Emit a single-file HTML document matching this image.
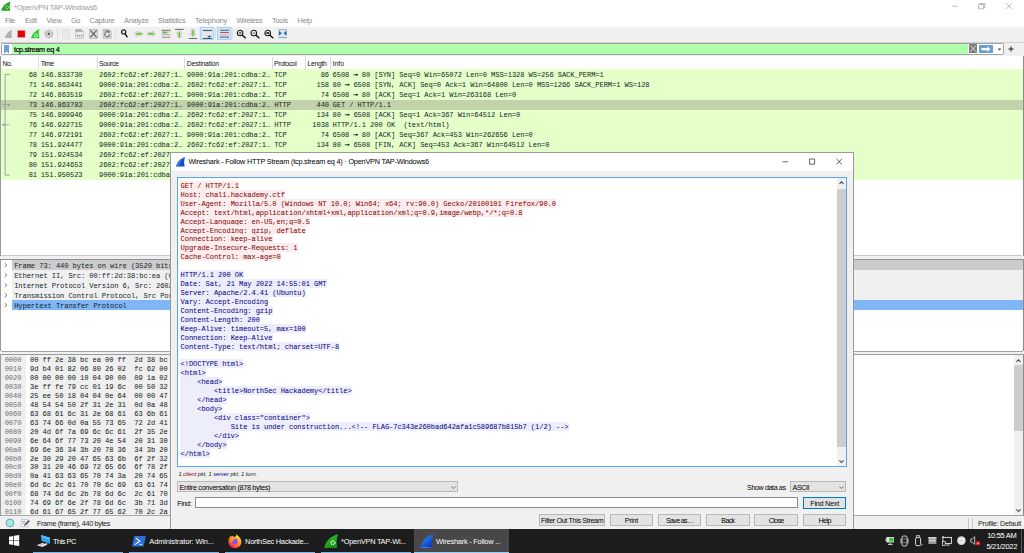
<!DOCTYPE html>
<html lang="en"><head><meta charset="utf-8"><title>Wireshark - Follow HTTP Stream</title>
<style>
html,body{margin:0;padding:0;}
body{width:1024px;height:553px;overflow:hidden;background:#fff;position:relative;font-family:"Liberation Sans",sans-serif;}
div{position:absolute;box-sizing:border-box;}
svg{position:absolute;overflow:visible;}
.t{position:absolute;white-space:pre;line-height:10px;}
.s{font-family:"Liberation Sans",sans-serif;}
.m{font-family:"Liberation Mono",monospace;}
</style></head>
<body>
<div style="left:0.00px;top:0.00px;width:1024.00px;height:13.00px;background:#fff;"></div>
<svg style="left:2px;top:1px" width="11" height="10" viewBox="0 0 11 10"><path d="M-0.8 9.7 C0.2 5.5 3.5 1.8 8.6 0.7 C7.6 3.5 7.4 6.5 8.2 9.7 Z" fill="#1fa51f"/><circle cx="5.1" cy="6.3" r="1.5" fill="none" stroke="#dff3df" stroke-width="1" stroke-dasharray="0.9 0.5"/></svg>
<span class="t s" style="top:3px;font-size:7.4px;color:#9a9a9a;left:14.10px;letter-spacing:-0.269px;">*OpenVPN TAP-Windows6</span>
<svg style="left:950px;top:0" width="70" height="13" viewBox="0 0 70 13"><path d="M2.2 6.2h5.6" stroke="#a8a8a8" stroke-width="0.7" fill="none"/><path d="M28.6 4.6h5v4.2h-5z M29.8 4.6v-1.1h5v4.2h-1.2" stroke="#9a9a9a" stroke-width="0.7" fill="none"/><path d="M56 3.2l6 6M62 3.2l-6 6" stroke="#9a9a9a" stroke-width="0.7" fill="none"/></svg>
<div style="left:0.00px;top:13.00px;width:1024.00px;height:13.00px;background:#fff;"></div>
<span class="t s" style="top:16px;font-size:7.4px;color:#8a8a8a;left:5.00px;letter-spacing:-0.480px;">File</span>
<span class="t s" style="top:16px;font-size:7.4px;color:#8a8a8a;left:25.00px;letter-spacing:-0.188px;">Edit</span>
<span class="t s" style="top:16px;font-size:7.4px;color:#8a8a8a;left:46.50px;letter-spacing:-0.223px;">View</span>
<span class="t s" style="top:16px;font-size:7.4px;color:#8a8a8a;left:71.00px;letter-spacing:-0.430px;">Go</span>
<span class="t s" style="top:16px;font-size:7.4px;color:#8a8a8a;left:89.50px;letter-spacing:-0.185px;">Capture</span>
<span class="t s" style="top:16px;font-size:7.4px;color:#8a8a8a;left:124.00px;letter-spacing:-0.257px;">Analyze</span>
<span class="t s" style="top:16px;font-size:7.4px;color:#8a8a8a;left:158.00px;letter-spacing:-0.208px;">Statistics</span>
<span class="t s" style="top:16px;font-size:7.4px;color:#8a8a8a;left:195.00px;letter-spacing:-0.189px;">Telephony</span>
<span class="t s" style="top:16px;font-size:7.4px;color:#8a8a8a;left:236.50px;letter-spacing:-0.355px;">Wireless</span>
<span class="t s" style="top:16px;font-size:7.4px;color:#8a8a8a;left:272.00px;letter-spacing:-0.253px;">Tools</span>
<span class="t s" style="top:16px;font-size:7.4px;color:#8a8a8a;left:297.50px;letter-spacing:-0.176px;">Help</span>
<div style="left:0.00px;top:26.00px;width:1024.00px;height:16.00px;background:linear-gradient(#fafafa,#f0f0f0 2px,#f0f0f0);"></div>
<div style="left:0.00px;top:41.50px;width:1024.00px;height:1.00px;background:#d0d0d0;"></div>
<div style="left:0.00px;top:42.50px;width:1024.00px;height:13.50px;background:#f0f0f0;"></div>
<svg style="left:0;top:26px" width="300" height="16" viewBox="0 0 300 16"><path d="M4.8 12 C5.6 8.2 8.2 5 12 3.9 C11.3 6.4 11.3 9.4 12.1 12 Z" fill="#b0b0b0"/><rect x="17.7" y="4.4" width="7.4" height="7" fill="#e00000" stroke="#c4a8a8" stroke-width="0.6"/><path d="M31 12.3 C32 8.4 35 4.6 39.4 3.3 C38.6 6.2 38.6 9.4 39.5 12.3 Z" fill="#2bd22b"/><circle cx="35.8" cy="9.4" r="1.5" fill="none" stroke="#eafbea" stroke-width="1.1" stroke-dasharray="0.9 0.5"/><circle cx="48.8" cy="7.9" r="3.7" fill="#e6e6e6" stroke="#9c9c9c" stroke-width="1.1" stroke-dasharray="1.5 0.8"/><circle cx="48.8" cy="7.9" r="2.5" fill="#ececec" stroke="#a8a8a8" stroke-width="0.5"/><circle cx="48.8" cy="7.9" r="1.3" fill="#5c5c5c"/><path d="M57.5 3v9.6" stroke="#d2d2d2" stroke-width="0.7"/><rect x="62.7" y="3.6" width="6.8" height="8.8" fill="#e9e9e9" stroke="#dcdcdc" stroke-width="0.6"/><path d="M75.7 3.4h5.4l2.4 2.4v6.6h-7.8z" fill="#ececec" stroke="#b4b4b4" stroke-width="0.6"/><path d="M75.7 3.4h5.4l2.4 2.4h-7.8z" fill="#a8a8a8"/><path d="M76.9 9.8h5.6" stroke="#8a8a8a" stroke-width="1.5" stroke-dasharray="1.2 0.9"/><rect x="89.4" y="3.4" width="8.2" height="9" fill="#dcdcdc" stroke="#b0b0b0" stroke-width="0.6"/><path d="M90.4 4.4l6.2 7M96.6 4.4l-6.2 7" stroke="#5e5e5e" stroke-width="1.1"/><path d="M103.1 3.4h6l2.2 2.2v6.8h-8.2z" fill="#dedede" stroke="#b0b0b0" stroke-width="0.6"/><path d="M103.1 3.4h6l2.2 2.2h-8.2z" fill="#b8b8b8"/><path d="M109.9 8.3a2.6 2.6 0 1 1 -1.3 -2.3" fill="none" stroke="#6e6e6e" stroke-width="1.1"/><path d="M107.6 4.4l2.6 1.3-2.2 1.7z" fill="#6e6e6e"/><path d="M115.4 3v9.6" stroke="#d2d2d2" stroke-width="0.7"/><circle cx="123.7" cy="5.9" r="2.1" fill="#dcdcdc" stroke="#1a1a1a" stroke-width="1.1"/><path d="M125.2 7.8l1.9 3" stroke="#111" stroke-width="1.4" stroke-linecap="round"/><path d="M134.1 7.8l3.3-2.6v1.1h4a1.5 1.5 0 0 1 0 3h-4v1.1z" fill="#e6eae2" stroke="#a9ada6" stroke-width="0.5"/><rect x="136.2" y="7.05" width="5.4" height="1.5" fill="#5cc020"/><path d="M155.9 7.8l-3.3-2.6v1.1h-4a1.5 1.5 0 0 0 0 3h4v1.1z" fill="#e6eae2" stroke="#a9ada6" stroke-width="0.5"/><rect x="148.4" y="7.05" width="5.4" height="1.5" fill="#5cc020"/><path d="M161.8 4.3h8.6" stroke="#444" stroke-width="0.8"/><path d="M161.8 8.8h8.6M161.8 11.5h8.6" stroke="#8a8a8a" stroke-width="0.8"/><rect x="161.8" y="9.3" width="8.6" height="1.6" fill="#dcdcdc"/><rect x="168.6" y="5" width="1.8" height="1.8" fill="#f2e85a"/><path d="M162 5.5h4v-1l2.6 2-2.6 2v-1h-4z" fill="#e6eae2" stroke="#a9ada6" stroke-width="0.5"/><rect x="162.6" y="6" width="4.4" height="1" fill="#5cc020"/><path d="M175 3.4h8.8" stroke="#444" stroke-width="0.8"/><path d="M179.3 4.5l3 3.2h-1.5v4h-3v-4h-1.5z" fill="#e6eae2" stroke="#a9ada6" stroke-width="0.5"/><rect x="178.6" y="6" width="1.4" height="5.2" fill="#5cc020"/><path d="M188.8 12.5h8.4" stroke="#444" stroke-width="0.8"/><path d="M192.9 11.3l3-3.2h-1.5v-4.4h-3v4.4h-1.5z" fill="#e6eae2" stroke="#a9ada6" stroke-width="0.5"/><rect x="192.2" y="4.2" width="1.4" height="5.6" fill="#5cc020"/><rect x="200.2" y="1.2" width="13.6" height="12.4" fill="#cce4f7" stroke="#8cc4f2" stroke-width="0.6"/><rect x="202.8" y="4.6" width="9.2" height="7.6" fill="#efefef"/><path d="M202.8 4.6h9.2" stroke="#333" stroke-width="0.9"/><path d="M202.8 7.2h9.2M202.8 9.4h9.2" stroke="#cfcfcf" stroke-width="0.6"/><path d="M202.8 12.4h9.2" stroke="#333" stroke-width="0.9"/><path d="M207 9.8h4.6l-2.3 2.2z" fill="#1c62c4"/><path d="M215.5 3v9.6" stroke="#d2d2d2" stroke-width="0.7"/><rect x="217.4" y="1.2" width="13.6" height="12.4" fill="#cce4f7" stroke="#8cc4f2" stroke-width="0.6"/><path d="M220.2 4.3h8.8" stroke="#444" stroke-width="0.8"/><path d="M220.2 6.5h8.8" stroke="#e83030" stroke-width="0.9"/><rect x="220.2" y="8" width="8.8" height="2.2" fill="#cdc6dc"/><path d="M220.2 11.2h8.8" stroke="#444" stroke-width="0.8"/><path d="M232.6 3v9.6" stroke="#d2d2d2" stroke-width="0.7"/><circle cx="240.1" cy="7" r="2.8" fill="#ececec" stroke="#1a1a1a" stroke-width="1.05"/><path d="M242.29999999999998 9.2l2.9 2.5" stroke="#111" stroke-width="1.5" stroke-linecap="round"/><circle cx="253.8" cy="7" r="2.8" fill="#ececec" stroke="#1a1a1a" stroke-width="1.05"/><path d="M256.0 9.2l2.9 2.5" stroke="#111" stroke-width="1.5" stroke-linecap="round"/><circle cx="267.7" cy="7" r="2.8" fill="#ececec" stroke="#1a1a1a" stroke-width="1.05"/><path d="M269.9 9.2l2.9 2.5" stroke="#111" stroke-width="1.5" stroke-linecap="round"/><path d="M238.7 7h2.8M240.1 5.6v2.8" stroke="#222" stroke-width="0.7"/><path d="M252.4 7h2.8" stroke="#555" stroke-width="0.8"/><rect x="266.4" y="6" width="2.6" height="2" fill="#333"/><path d="M278.4 3.8h8.6M278.4 11.6h8.6" stroke="#777" stroke-width="0.7"/><rect x="278.6" y="4.6" width="8.2" height="5.6" fill="#dfe8f4"/><path d="M278.8 4.6l3 2.6-3 2.6z M286.6 4.6l-3 2.6 3 2.6z" fill="#1c62c4"/><path d="M279.4 10.6h6.6" stroke="#bbb" stroke-width="0.5" stroke-dasharray="1 0.6"/></svg>
<div style="left:1.00px;top:43.00px;width:1003.00px;height:11.50px;background:#fff;border:0.7px solid #a2a2a2;border-radius:1.5px;"></div>
<div style="left:12.30px;top:43.60px;width:956.00px;height:10.30px;background:#afffaf;"></div>
<svg style="left:3.6px;top:44.6px" width="5" height="8.4" viewBox="0 0 5 8.4"><path d="M0 0h5v8.4l-2.5-2-2.5 2z" fill="#6f9fd8"/></svg>
<span class="t s" style="top:45px;font-size:7.3px;color:#000;left:14.00px;letter-spacing:-0.326px;-webkit-text-stroke:0.2px #000;">tcp.stream eq 4</span>
<div style="left:968.60px;top:44.20px;width:8.40px;height:9.20px;background:#7d7d7d;"></div>
<svg style="left:968.6px;top:44.2px" width="8.4" height="9.2" viewBox="0 0 8.4 9.2"><path d="M1.4 1.6l5.6 6M7 1.6l-5.6 6" stroke="#f4f4f4" stroke-width="0.8"/></svg>
<div style="left:979.20px;top:44.60px;width:13.80px;height:8.20px;background:#6a9fd6;border-radius:1px;"></div>
<svg style="left:979.2px;top:44.6px" width="13.8" height="8.2" viewBox="0 0 13.8 8.2"><path d="M2.4 3h5.6v-1.6l3.6 2.7-3.6 2.7v-1.6h-5.6z" fill="#fff"/></svg>
<svg style="left:997px;top:47.6px" width="5" height="3" viewBox="0 0 5 3"><path d="M0.6 0.4h3.8l-1.9 2.2z" fill="#444"/></svg>
<svg style="left:1007.6px;top:46.2px" width="6" height="6" viewBox="0 0 6 6"><path d="M3 0.4v5.2M0.4 3h5.2" stroke="#222" stroke-width="1"/></svg>
<div style="left:0.00px;top:55.50px;width:1024.00px;height:0.90px;background:#a0a0a0;"></div>
<div style="left:0.00px;top:56.30px;width:1023.00px;height:13.20px;background:#fff;"></div>
<div style="left:0.00px;top:56.00px;width:0.90px;height:200.00px;background:#9a9a9a;"></div>
<div style="left:1022.60px;top:56.00px;width:0.90px;height:200.00px;background:#8a8a8a;"></div>
<div style="left:38.30px;top:57.00px;width:0.70px;height:11.50px;background:#dcdcdc;"></div>
<div style="left:96.50px;top:57.00px;width:0.70px;height:11.50px;background:#dcdcdc;"></div>
<div style="left:184.40px;top:57.00px;width:0.70px;height:11.50px;background:#dcdcdc;"></div>
<div style="left:272.00px;top:57.00px;width:0.70px;height:11.50px;background:#dcdcdc;"></div>
<div style="left:305.00px;top:57.00px;width:0.70px;height:11.50px;background:#dcdcdc;"></div>
<div style="left:330.20px;top:57.00px;width:0.70px;height:11.50px;background:#dcdcdc;"></div>
<span class="t s" style="top:59px;font-size:6.9px;color:#111;left:2.60px;letter-spacing:-0.611px;">No.</span>
<span class="t s" style="top:59px;font-size:6.9px;color:#111;left:40.80px;letter-spacing:-0.591px;">Time</span>
<span class="t s" style="top:59px;font-size:6.9px;color:#111;left:99.00px;letter-spacing:-0.391px;">Source</span>
<span class="t s" style="top:59px;font-size:6.9px;color:#111;left:186.80px;letter-spacing:-0.208px;">Destination</span>
<span class="t s" style="top:59px;font-size:6.9px;color:#111;left:274.00px;letter-spacing:-0.348px;">Protocol</span>
<span class="t s" style="top:59px;font-size:6.9px;color:#111;left:307.60px;letter-spacing:-0.363px;">Length</span>
<span class="t s" style="top:59px;font-size:6.9px;color:#111;left:332.60px;letter-spacing:-0.025px;">Info</span>
<div style="left:1.00px;top:69.40px;width:1021.60px;height:110.97px;background:#e4ffc7;"></div>
<div style="left:1.00px;top:99.61px;width:1021.60px;height:10.07px;background:#c2d3ab;"></div>
<span class="t m" style="top:70px;font-size:7.1px;color:#12272e;right:987.00px;letter-spacing:-0.088px;">68</span>
<span class="t m" style="top:70px;font-size:7.1px;color:#12272e;left:40.80px;letter-spacing:-0.088px;">146.833730</span>
<span class="t m" style="top:70px;font-size:7.1px;color:#12272e;left:99.00px;letter-spacing:-0.087px;">2602:fc62:ef:2027:1…</span>
<span class="t m" style="top:70px;font-size:7.1px;color:#12272e;left:186.80px;letter-spacing:-0.087px;">9000:91a:201:cdba:2…</span>
<span class="t m" style="top:70px;font-size:7.1px;color:#12272e;left:274.20px;letter-spacing:-0.090px;">TCP</span>
<span class="t m" style="top:70px;font-size:7.1px;color:#12272e;right:695.00px;letter-spacing:-0.088px;">86</span>
<span class="t m" style="top:70px;font-size:7.1px;color:#12272e;left:332.60px;letter-spacing:-0.087px;">6508 <b style="-webkit-text-stroke:0.4px #12272e;position:relative;top:-1px">→</b> 80 [SYN] Seq=0 Win=65072 Len=0 MSS=1328 WS=256 SACK_PERM=1</span>
<span class="t m" style="top:80px;font-size:7.1px;color:#12272e;right:987.00px;letter-spacing:-0.088px;">71</span>
<span class="t m" style="top:80px;font-size:7.1px;color:#12272e;left:40.80px;letter-spacing:-0.088px;">146.863441</span>
<span class="t m" style="top:80px;font-size:7.1px;color:#12272e;left:99.00px;letter-spacing:-0.087px;">9000:91a:201:cdba:2…</span>
<span class="t m" style="top:80px;font-size:7.1px;color:#12272e;left:186.80px;letter-spacing:-0.087px;">2602:fc62:ef:2027:1…</span>
<span class="t m" style="top:80px;font-size:7.1px;color:#12272e;left:274.20px;letter-spacing:-0.090px;">TCP</span>
<span class="t m" style="top:80px;font-size:7.1px;color:#12272e;right:695.00px;letter-spacing:-0.090px;">158</span>
<span class="t m" style="top:80px;font-size:7.1px;color:#12272e;left:332.60px;letter-spacing:-0.087px;">80 <b style="-webkit-text-stroke:0.4px #12272e;position:relative;top:-1px">→</b> 6508 [SYN, ACK] Seq=0 Ack=1 Win=64800 Len=0 MSS=1266 SACK_PERM=1 WS=128</span>
<span class="t m" style="top:90px;font-size:7.1px;color:#12272e;right:987.00px;letter-spacing:-0.088px;">72</span>
<span class="t m" style="top:90px;font-size:7.1px;color:#12272e;left:40.80px;letter-spacing:-0.088px;">146.863519</span>
<span class="t m" style="top:90px;font-size:7.1px;color:#12272e;left:99.00px;letter-spacing:-0.087px;">2602:fc62:ef:2027:1…</span>
<span class="t m" style="top:90px;font-size:7.1px;color:#12272e;left:186.80px;letter-spacing:-0.087px;">9000:91a:201:cdba:2…</span>
<span class="t m" style="top:90px;font-size:7.1px;color:#12272e;left:274.20px;letter-spacing:-0.090px;">TCP</span>
<span class="t m" style="top:90px;font-size:7.1px;color:#12272e;right:695.00px;letter-spacing:-0.088px;">74</span>
<span class="t m" style="top:90px;font-size:7.1px;color:#12272e;left:332.60px;letter-spacing:-0.087px;">6508 <b style="-webkit-text-stroke:0.4px #12272e;position:relative;top:-1px">→</b> 80 [ACK] Seq=1 Ack=1 Win=263168 Len=0</span>
<span class="t m" style="top:100px;font-size:7.1px;color:#12272e;right:987.00px;letter-spacing:-0.088px;">73</span>
<span class="t m" style="top:100px;font-size:7.1px;color:#12272e;left:40.80px;letter-spacing:-0.088px;">146.863783</span>
<span class="t m" style="top:100px;font-size:7.1px;color:#12272e;left:99.00px;letter-spacing:-0.087px;">2602:fc62:ef:2027:1…</span>
<span class="t m" style="top:100px;font-size:7.1px;color:#12272e;left:186.80px;letter-spacing:-0.087px;">9000:91a:201:cdba:2…</span>
<span class="t m" style="top:100px;font-size:7.1px;color:#12272e;left:274.20px;letter-spacing:-0.088px;">HTTP</span>
<span class="t m" style="top:100px;font-size:7.1px;color:#12272e;right:695.00px;letter-spacing:-0.090px;">440</span>
<span class="t m" style="top:100px;font-size:7.1px;color:#12272e;left:332.60px;letter-spacing:-0.087px;">GET / HTTP/1.1 </span>
<span class="t m" style="top:110px;font-size:7.1px;color:#12272e;right:987.00px;letter-spacing:-0.088px;">75</span>
<span class="t m" style="top:110px;font-size:7.1px;color:#12272e;left:40.80px;letter-spacing:-0.088px;">146.899946</span>
<span class="t m" style="top:110px;font-size:7.1px;color:#12272e;left:99.00px;letter-spacing:-0.087px;">9000:91a:201:cdba:2…</span>
<span class="t m" style="top:110px;font-size:7.1px;color:#12272e;left:186.80px;letter-spacing:-0.087px;">2602:fc62:ef:2027:1…</span>
<span class="t m" style="top:110px;font-size:7.1px;color:#12272e;left:274.20px;letter-spacing:-0.090px;">TCP</span>
<span class="t m" style="top:110px;font-size:7.1px;color:#12272e;right:695.00px;letter-spacing:-0.090px;">134</span>
<span class="t m" style="top:110px;font-size:7.1px;color:#12272e;left:332.60px;letter-spacing:-0.088px;">80 <b style="-webkit-text-stroke:0.4px #12272e;position:relative;top:-1px">→</b> 6508 [ACK] Seq=1 Ack=367 Win=64512 Len=0</span>
<span class="t m" style="top:120px;font-size:7.1px;color:#12272e;right:987.00px;letter-spacing:-0.088px;">76</span>
<span class="t m" style="top:120px;font-size:7.1px;color:#12272e;left:40.80px;letter-spacing:-0.088px;">146.922715</span>
<span class="t m" style="top:120px;font-size:7.1px;color:#12272e;left:99.00px;letter-spacing:-0.087px;">9000:91a:201:cdba:2…</span>
<span class="t m" style="top:120px;font-size:7.1px;color:#12272e;left:186.80px;letter-spacing:-0.087px;">2602:fc62:ef:2027:1…</span>
<span class="t m" style="top:120px;font-size:7.1px;color:#12272e;left:274.20px;letter-spacing:-0.088px;">HTTP</span>
<span class="t m" style="top:120px;font-size:7.1px;color:#12272e;right:695.00px;letter-spacing:-0.088px;">1038</span>
<span class="t m" style="top:120px;font-size:7.1px;color:#12272e;left:332.60px;letter-spacing:-0.087px;">HTTP/1.1 200 OK  (text/html)</span>
<span class="t m" style="top:130px;font-size:7.1px;color:#12272e;right:987.00px;letter-spacing:-0.088px;">77</span>
<span class="t m" style="top:130px;font-size:7.1px;color:#12272e;left:40.80px;letter-spacing:-0.088px;">146.972191</span>
<span class="t m" style="top:130px;font-size:7.1px;color:#12272e;left:99.00px;letter-spacing:-0.087px;">2602:fc62:ef:2027:1…</span>
<span class="t m" style="top:130px;font-size:7.1px;color:#12272e;left:186.80px;letter-spacing:-0.087px;">9000:91a:201:cdba:2…</span>
<span class="t m" style="top:130px;font-size:7.1px;color:#12272e;left:274.20px;letter-spacing:-0.090px;">TCP</span>
<span class="t m" style="top:130px;font-size:7.1px;color:#12272e;right:695.00px;letter-spacing:-0.088px;">74</span>
<span class="t m" style="top:130px;font-size:7.1px;color:#12272e;left:332.60px;letter-spacing:-0.087px;">6508 <b style="-webkit-text-stroke:0.4px #12272e;position:relative;top:-1px">→</b> 80 [ACK] Seq=367 Ack=453 Win=262656 Len=0</span>
<span class="t m" style="top:140px;font-size:7.1px;color:#12272e;right:987.00px;letter-spacing:-0.088px;">78</span>
<span class="t m" style="top:140px;font-size:7.1px;color:#12272e;left:40.80px;letter-spacing:-0.088px;">151.924477</span>
<span class="t m" style="top:140px;font-size:7.1px;color:#12272e;left:99.00px;letter-spacing:-0.087px;">9000:91a:201:cdba:2…</span>
<span class="t m" style="top:140px;font-size:7.1px;color:#12272e;left:186.80px;letter-spacing:-0.087px;">2602:fc62:ef:2027:1…</span>
<span class="t m" style="top:140px;font-size:7.1px;color:#12272e;left:274.20px;letter-spacing:-0.090px;">TCP</span>
<span class="t m" style="top:140px;font-size:7.1px;color:#12272e;right:695.00px;letter-spacing:-0.090px;">134</span>
<span class="t m" style="top:140px;font-size:7.1px;color:#12272e;left:332.60px;letter-spacing:-0.088px;">80 <b style="-webkit-text-stroke:0.4px #12272e;position:relative;top:-1px">→</b> 6508 [FIN, ACK] Seq=453 Ack=367 Win=64512 Len=0</span>
<span class="t m" style="top:150px;font-size:7.1px;color:#12272e;right:987.00px;letter-spacing:-0.088px;">79</span>
<span class="t m" style="top:150px;font-size:7.1px;color:#12272e;left:40.80px;letter-spacing:-0.088px;">151.924534</span>
<span class="t m" style="top:150px;font-size:7.1px;color:#12272e;left:99.00px;letter-spacing:-0.087px;">2602:fc62:ef:2027:1…</span>
<span class="t m" style="top:150px;font-size:7.1px;color:#12272e;left:186.80px;letter-spacing:-0.087px;">9000:91a:201:cdba:2…</span>
<span class="t m" style="top:150px;font-size:7.1px;color:#12272e;left:274.20px;letter-spacing:-0.090px;">TCP</span>
<span class="t m" style="top:150px;font-size:7.1px;color:#12272e;right:695.00px;letter-spacing:-0.088px;">74</span>
<span class="t m" style="top:150px;font-size:7.1px;color:#12272e;left:332.60px;letter-spacing:-0.087px;">6508 <b style="-webkit-text-stroke:0.4px #12272e;position:relative;top:-1px">→</b> 80 [ACK] Seq=368 Ack=454 Win=262656 Len=0</span>
<span class="t m" style="top:160px;font-size:7.1px;color:#12272e;right:987.00px;letter-spacing:-0.088px;">80</span>
<span class="t m" style="top:160px;font-size:7.1px;color:#12272e;left:40.80px;letter-spacing:-0.088px;">151.924653</span>
<span class="t m" style="top:160px;font-size:7.1px;color:#12272e;left:99.00px;letter-spacing:-0.087px;">2602:fc62:ef:2027:1…</span>
<span class="t m" style="top:160px;font-size:7.1px;color:#12272e;left:186.80px;letter-spacing:-0.087px;">9000:91a:201:cdba:2…</span>
<span class="t m" style="top:160px;font-size:7.1px;color:#12272e;left:274.20px;letter-spacing:-0.090px;">TCP</span>
<span class="t m" style="top:160px;font-size:7.1px;color:#12272e;right:695.00px;letter-spacing:-0.088px;">74</span>
<span class="t m" style="top:160px;font-size:7.1px;color:#12272e;left:332.60px;letter-spacing:-0.087px;">6508 <b style="-webkit-text-stroke:0.4px #12272e;position:relative;top:-1px">→</b> 80 [FIN, ACK] Seq=368 Ack=454 Win=262656 Len=0</span>
<span class="t m" style="top:170px;font-size:7.1px;color:#12272e;right:987.00px;letter-spacing:-0.088px;">81</span>
<span class="t m" style="top:170px;font-size:7.1px;color:#12272e;left:40.80px;letter-spacing:-0.088px;">151.950523</span>
<span class="t m" style="top:170px;font-size:7.1px;color:#12272e;left:99.00px;letter-spacing:-0.087px;">9000:91a:201:cdba:2…</span>
<span class="t m" style="top:170px;font-size:7.1px;color:#12272e;left:186.80px;letter-spacing:-0.087px;">2602:fc62:ef:2027:1…</span>
<span class="t m" style="top:170px;font-size:7.1px;color:#12272e;left:274.20px;letter-spacing:-0.090px;">TCP</span>
<span class="t m" style="top:170px;font-size:7.1px;color:#12272e;right:695.00px;letter-spacing:-0.088px;">74</span>
<span class="t m" style="top:170px;font-size:7.1px;color:#12272e;left:332.60px;letter-spacing:-0.088px;">80 <b style="-webkit-text-stroke:0.4px #12272e;position:relative;top:-1px">→</b> 6508 [ACK] Seq=454 Ack=369 Win=64512 Len=0</span>
<svg style="left:0;top:0" width="20" height="200" viewBox="0 0 20 200"><path d="M9.6 74.435H5.1V175.135H9.6" fill="none" stroke="#7f868e" stroke-width="0.75"/><path d="M2.2 104.64500000000001h7.4" stroke="#8d93a0" stroke-width="0.7"/><path d="M8 103.34500000000001l2.2 1.3-2.2 1.3z" fill="#8d93a0"/><path d="M2.4 124.78500000000001h7.2" stroke="#8d93a0" stroke-width="0.7"/><path d="M4.2 123.48500000000001l-2.2 1.3 2.2 1.3z" fill="#8d93a0"/></svg>
<div style="left:1.00px;top:255.00px;width:1021.40px;height:0.80px;background:#c8c8c8;"></div>
<div style="left:0.00px;top:255.80px;width:1024.00px;height:3.00px;background:#f0f0f0;"></div>
<div style="left:0.00px;top:259.00px;width:1024.00px;height:1.00px;background:#8e9098;"></div>
<div style="left:0.00px;top:259.60px;width:0.90px;height:91.60px;background:#9a9a9a;"></div>
<div style="left:1022.60px;top:259.60px;width:0.90px;height:91.60px;background:#8a8a8a;"></div>
<div style="left:1.00px;top:260.00px;width:1021.60px;height:91.00px;background:#fff;"></div>
<div style="left:12.40px;top:259.80px;width:1010.30px;height:10.07px;background:#cbcbcb;"></div>
<div style="left:12.40px;top:269.87px;width:1010.30px;height:30.21px;background:#f0f0f0;"></div>
<div style="left:12.40px;top:300.08px;width:1010.30px;height:10.07px;background:#80b5f6;"></div>
<span class="t m" style="top:261px;font-size:7.1px;color:#12272e;left:14.20px;letter-spacing:-0.087px;">Frame 73: 440 bytes on wire (3520 bits</span>
<svg style="left:4px;top:262.64px" width="4" height="4.4" viewBox="0 0 4 4.4"><path d="M0.7 0.2l2.3 2-2.3 2" fill="none" stroke="#5e5e5e" stroke-width="0.75"/></svg>
<span class="t m" style="top:271px;font-size:7.1px;color:#12272e;left:14.20px;letter-spacing:-0.087px;">Ethernet II, Src: 00:ff:2d:38:bc:ea (0</span>
<svg style="left:4px;top:272.71px" width="4" height="4.4" viewBox="0 0 4 4.4"><path d="M0.7 0.2l2.3 2-2.3 2" fill="none" stroke="#5e5e5e" stroke-width="0.75"/></svg>
<span class="t m" style="top:281px;font-size:7.1px;color:#12272e;left:14.20px;letter-spacing:-0.087px;">Internet Protocol Version 6, Src: 2602</span>
<svg style="left:4px;top:282.78px" width="4" height="4.4" viewBox="0 0 4 4.4"><path d="M0.7 0.2l2.3 2-2.3 2" fill="none" stroke="#5e5e5e" stroke-width="0.75"/></svg>
<span class="t m" style="top:291px;font-size:7.1px;color:#12272e;left:14.20px;letter-spacing:-0.087px;">Transmission Control Protocol, Src Por</span>
<svg style="left:4px;top:292.85px" width="4" height="4.4" viewBox="0 0 4 4.4"><path d="M0.7 0.2l2.3 2-2.3 2" fill="none" stroke="#5e5e5e" stroke-width="0.75"/></svg>
<span class="t m" style="top:301px;font-size:7.1px;color:#12272e;left:14.20px;letter-spacing:-0.087px;">Hypertext Transfer Protocol</span>
<svg style="left:4px;top:302.92px" width="4" height="4.4" viewBox="0 0 4 4.4"><path d="M0.7 0.2l2.3 2-2.3 2" fill="none" stroke="#5e5e5e" stroke-width="0.75"/></svg>
<div style="left:1.00px;top:351.00px;width:1022.00px;height:1.00px;background:#a2a3aa;"></div>
<div style="left:0.00px;top:352.00px;width:1024.00px;height:2.00px;background:#f0f0f0;"></div>
<div style="left:0.00px;top:353.90px;width:1024.00px;height:1.00px;background:#9a9ba2;"></div>
<div style="left:0.00px;top:355.40px;width:0.90px;height:160.60px;background:#9a9a9a;"></div>
<div style="left:1022.60px;top:355.40px;width:0.90px;height:160.60px;background:#8a8a8a;"></div>
<div style="left:1.00px;top:354.90px;width:1021.60px;height:161.10px;background:#fff;"></div>
<div style="left:1.00px;top:354.90px;width:24.50px;height:161.10px;background:#efefef;"></div>
<div style="left:29.50px;top:354.90px;width:145.00px;height:161.10px;background:#efefef;"></div>
<span class="t m" style="top:355px;font-size:7.1px;color:#707070;left:4.70px;letter-spacing:-0.088px;">0000</span>
<span class="t m" style="top:355px;font-size:7.1px;color:#0e1a20;left:30.00px;letter-spacing:-0.087px;">00 ff 2e 38 bc ea 00 ff  2d 38 bc ea</span>
<span class="t m" style="top:364px;font-size:7.1px;color:#707070;left:4.70px;letter-spacing:-0.088px;">0010</span>
<span class="t m" style="top:364px;font-size:7.1px;color:#0e1a20;left:30.00px;letter-spacing:-0.087px;">9d b4 01 82 06 80 26 02  fc 62 00 ef</span>
<span class="t m" style="top:373px;font-size:7.1px;color:#707070;left:4.70px;letter-spacing:-0.088px;">0020</span>
<span class="t m" style="top:373px;font-size:7.1px;color:#0e1a20;left:30.00px;letter-spacing:-0.087px;">00 00 00 00 10 04 90 00  09 1a 02 01</span>
<span class="t m" style="top:382px;font-size:7.1px;color:#707070;left:4.70px;letter-spacing:-0.088px;">0030</span>
<span class="t m" style="top:382px;font-size:7.1px;color:#0e1a20;left:30.00px;letter-spacing:-0.087px;">3e ff fe 79 cc 01 19 6c  00 50 32 1e</span>
<span class="t m" style="top:391px;font-size:7.1px;color:#707070;left:4.70px;letter-spacing:-0.088px;">0040</span>
<span class="t m" style="top:391px;font-size:7.1px;color:#0e1a20;left:30.00px;letter-spacing:-0.087px;">25 ee 50 18 04 04 0e 64  00 00 47 45</span>
<span class="t m" style="top:400px;font-size:7.1px;color:#707070;left:4.70px;letter-spacing:-0.088px;">0050</span>
<span class="t m" style="top:400px;font-size:7.1px;color:#0e1a20;left:30.00px;letter-spacing:-0.087px;">48 54 54 50 2f 31 2e 31  0d 0a 48 6f</span>
<span class="t m" style="top:409px;font-size:7.1px;color:#707070;left:4.70px;letter-spacing:-0.088px;">0060</span>
<span class="t m" style="top:409px;font-size:7.1px;color:#0e1a20;left:30.00px;letter-spacing:-0.087px;">63 68 61 6c 31 2e 68 61  63 6b 61 64</span>
<span class="t m" style="top:418px;font-size:7.1px;color:#707070;left:4.70px;letter-spacing:-0.088px;">0070</span>
<span class="t m" style="top:418px;font-size:7.1px;color:#0e1a20;left:30.00px;letter-spacing:-0.087px;">63 74 66 0d 0a 55 73 65  72 2d 41 67</span>
<span class="t m" style="top:427px;font-size:7.1px;color:#707070;left:4.70px;letter-spacing:-0.088px;">0080</span>
<span class="t m" style="top:427px;font-size:7.1px;color:#0e1a20;left:30.00px;letter-spacing:-0.087px;">20 4d 6f 7a 69 6c 6c 61  2f 35 2e 30</span>
<span class="t m" style="top:436px;font-size:7.1px;color:#707070;left:4.70px;letter-spacing:-0.088px;">0090</span>
<span class="t m" style="top:436px;font-size:7.1px;color:#0e1a20;left:30.00px;letter-spacing:-0.087px;">6e 64 6f 77 73 20 4e 54  20 31 30 2e</span>
<span class="t m" style="top:445px;font-size:7.1px;color:#707070;left:4.70px;letter-spacing:-0.088px;">00a0</span>
<span class="t m" style="top:445px;font-size:7.1px;color:#0e1a20;left:30.00px;letter-spacing:-0.087px;">69 6e 36 34 3b 20 78 36  34 3b 20 72</span>
<span class="t m" style="top:454px;font-size:7.1px;color:#707070;left:4.70px;letter-spacing:-0.088px;">00b0</span>
<span class="t m" style="top:454px;font-size:7.1px;color:#0e1a20;left:30.00px;letter-spacing:-0.087px;">2e 30 29 20 47 65 63 6b  6f 2f 32 30</span>
<span class="t m" style="top:462px;font-size:7.1px;color:#707070;left:4.70px;letter-spacing:-0.088px;">00c0</span>
<span class="t m" style="top:462px;font-size:7.1px;color:#0e1a20;left:30.00px;letter-spacing:-0.087px;">30 31 20 46 69 72 65 66  6f 78 2f 39</span>
<span class="t m" style="top:471px;font-size:7.1px;color:#707070;left:4.70px;letter-spacing:-0.088px;">00d0</span>
<span class="t m" style="top:471px;font-size:7.1px;color:#0e1a20;left:30.00px;letter-spacing:-0.087px;">0a 41 63 63 65 70 74 3a  20 74 65 78</span>
<span class="t m" style="top:480px;font-size:7.1px;color:#707070;left:4.70px;letter-spacing:-0.088px;">00e0</span>
<span class="t m" style="top:480px;font-size:7.1px;color:#0e1a20;left:30.00px;letter-spacing:-0.087px;">6d 6c 2c 61 70 70 6c 69  63 61 74 69</span>
<span class="t m" style="top:489px;font-size:7.1px;color:#707070;left:4.70px;letter-spacing:-0.088px;">00f0</span>
<span class="t m" style="top:489px;font-size:7.1px;color:#0e1a20;left:30.00px;letter-spacing:-0.087px;">68 74 6d 6c 2b 78 6d 6c  2c 61 70 70</span>
<span class="t m" style="top:498px;font-size:7.1px;color:#707070;left:4.70px;letter-spacing:-0.088px;">0100</span>
<span class="t m" style="top:498px;font-size:7.1px;color:#0e1a20;left:30.00px;letter-spacing:-0.087px;">74 69 6f 6e 2f 78 6d 6c  3b 71 3d 30</span>
<span class="t m" style="top:507px;font-size:7.1px;color:#707070;left:4.70px;letter-spacing:-0.088px;">0110</span>
<span class="t m" style="top:507px;font-size:7.1px;color:#0e1a20;left:30.00px;letter-spacing:-0.087px;">6d 61 67 65 2f 77 65 62  70 2c 2a 2f</span>
<div style="left:1014.00px;top:354.90px;width:8.60px;height:160.50px;background:#f0f0f0;"></div>
<div style="left:1014.00px;top:365.00px;width:8.60px;height:65.60px;background:#cdcdcd;"></div>
<svg style="left:1015.8px;top:359.2px" width="5" height="3.4" viewBox="0 0 5 3.4"><path d="M0.4 3l2.1-2.2 2.1 2.2" fill="none" stroke="#444" stroke-width="1.05"/></svg>
<svg style="left:1015.8px;top:508.8px" width="5" height="3.4" viewBox="0 0 5 3.4"><path d="M0.4 0.4l2.1 2.2 2.1-2.2" fill="none" stroke="#444" stroke-width="1.05"/></svg>
<div style="left:0.00px;top:516.00px;width:1024.00px;height:13.20px;background:#f0f0f0;"></div>
<div style="left:0.00px;top:515.40px;width:1023.00px;height:0.70px;background:#a8a8a8;"></div>
<svg style="left:5px;top:517.5px" width="10" height="10" viewBox="0 0 10 10"><circle cx="5" cy="5" r="3.9" fill="#a4e8e8" stroke="#4f9494" stroke-width="0.75"/></svg>
<svg style="left:19.6px;top:517.6px" width="10" height="10" viewBox="0 0 10 10"><rect x="1.2" y="1.4" width="6.6" height="7.4" fill="#fafafa" stroke="#b0b0b0" stroke-width="0.6"/><path d="M2.4 3.4h3M2.4 5.2h2.2" stroke="#3a7ad0" stroke-width="0.7"/><path d="M4 8l0.6-2 4-4 1.2 1.2-4 4z" fill="#555"/></svg>
<span class="t s" style="top:519px;font-size:7.2px;color:#222;left:37.00px;letter-spacing:-0.337px;">Frame (frame), 440 bytes</span>
<div style="left:968.20px;top:517.60px;width:0.70px;height:11.00px;background:#c4c4c4;"></div>
<div style="left:971.60px;top:517.60px;width:0.70px;height:11.00px;background:#c4c4c4;"></div>
<span class="t s" style="top:519px;font-size:7.2px;color:#222;left:978.00px;letter-spacing:-0.259px;">Profile: Default</span>
<div style="left:0.00px;top:529.20px;width:1024.00px;height:23.80px;background:#1d1d1d;"></div>
<div style="left:413.80px;top:529.20px;width:95.40px;height:23.80px;background:#484848;"></div>
<div style="left:32.80px;top:551.70px;width:90.20px;height:1.30px;background:#76b9ed;"></div>
<div style="left:128.80px;top:551.70px;width:90.20px;height:1.30px;background:#76b9ed;"></div>
<div style="left:225.20px;top:551.70px;width:90.00px;height:1.30px;background:#76b9ed;"></div>
<div style="left:321.20px;top:551.70px;width:89.60px;height:1.30px;background:#76b9ed;"></div>
<div style="left:413.80px;top:551.70px;width:95.40px;height:1.30px;background:#8fd0fb;"></div>
<svg style="left:9px;top:535.4px" width="10.2" height="11" viewBox="0 0 10.2 11"><path d="M0 1.7l4.3-0.75v4.2h-4.3z M5 0.85l5.2-0.85v5.15h-5.2z M0 5.85h4.3v4.2l-4.3-0.75z M5 5.85h5.2v5.15l-5.2-0.85z" fill="#fff"/></svg>
<svg style="left:36px;top:534px" width="15" height="14" viewBox="0 0 15 14"><path d="M5 0.9l9 2.9v5.9l-8.5-2.7z" fill="#2ea3f2"/><path d="M5 0.9l9 2.9v2l-8.8-2.6z" fill="#58bbf8"/><path d="M9.6 8.4l1.6 0.5v1.2l-1.6-0.4z" fill="#c8c8c8"/><path d="M0.7 11.2l5.6-2.3 5.4 1.6-5.4 2.6z" fill="#efefef"/><path d="M2.8 11.3l3.4-1.4 2.4 0.7-3.4 1.5z" fill="#bdbdbd"/></svg>
<span class="t s" style="top:537px;font-size:7.4px;color:#fff;left:53.10px;letter-spacing:-0.500px;">This PC</span>
<svg style="left:132.4px;top:535.6px" width="14" height="10.6" viewBox="0 0 14 10.6"><path d="M2.3 0h11.6l-2.3 10.5h-11.6z" fill="#2f6fd8"/><path d="M4.2 2.4l3.6 2.9-4.6 3.1" fill="none" stroke="#fff" stroke-width="1.1" stroke-linecap="round"/><path d="M7.4 8.5h2.6" stroke="#e8e8e8" stroke-width="1"/></svg>
<span class="t s" style="top:537px;font-size:7.4px;color:#fff;left:149.30px;letter-spacing:-0.101px;">Administrator: Win...</span>
<svg style="left:228.2px;top:533.8px" width="14" height="14.2" viewBox="0 0 14 14.2"><defs><linearGradient id="ffg" x1="0.85" y1="0.1" x2="0.25" y2="1"><stop offset="0" stop-color="#fff04a"/><stop offset="0.35" stop-color="#ffa91f"/><stop offset="0.7" stop-color="#ff5a2a"/><stop offset="1" stop-color="#e31587"/></linearGradient><radialGradient id="ffp" cx="0.5" cy="0.5" r="0.6"><stop offset="0" stop-color="#7a52ff"/><stop offset="1" stop-color="#a03de0"/></radialGradient></defs><path d="M8.6 0.2c0.6 1.3 1.9 1.9 3 3.2c1.6 1.9 2.3 4.4 1.5 6.7c-0.9 2.6-3.4 4.1-6.1 4.1c-3.6 0-6.6-2.9-6.6-6.5c0-1.9 0.5-3.5 1.5-4.7l0.5-1.6 1.2 1.3 0.9-1.3c0.3 0.9 0.9 1.3 1.9 1.5c1.2-0.3 2.1-1.3 2.2-2.7z" fill="url(#ffg)"/><circle cx="6.8" cy="7.3" r="2.9" fill="url(#ffp)"/><path d="M3 5.2c1.4-0.9 3.2-0.5 4.2 0.3c-1.2 0.1-1.6 0.7-1.7 1.3c-1.2 0.1-2 0.9-1.8 2.1c-1.2-0.8-1.5-2.4-0.7-3.7z" fill="#ff9a1f"/></svg>
<span class="t s" style="top:537px;font-size:7.4px;color:#fff;left:245.10px;letter-spacing:-0.242px;">NorthSec Hackade...</span>
<svg style="left:324px;top:533.8px" width="15" height="14.2" viewBox="0 0 15 14.2"><defs><linearGradient id="gg" x1="0.3" y1="0" x2="0.8" y2="1"><stop offset="0" stop-color="#2fc02f"/><stop offset="1" stop-color="#128a12"/></linearGradient></defs><path d="M0.2 13.9 C1.6 7.6 6.4 1.8 14.3 0.2 C12.3 4.6 12.1 9.2 13.5 13.9 Z" fill="url(#gg)"/><circle cx="9" cy="8.7" r="1.9" fill="none" stroke="#e4f6e4" stroke-width="1.3" stroke-dasharray="1.1 0.55"/></svg>
<span class="t s" style="top:537px;font-size:7.4px;color:#fff;left:341.10px;letter-spacing:-0.252px;">*OpenVPN TAP-Wi...</span>
<svg style="left:419.8px;top:533.8px" width="14" height="14.2" viewBox="0 0 14 14.2"><defs><linearGradient id="bg" x1="0.2" y1="0.1" x2="0.9" y2="0.95"><stop offset="0" stop-color="#3a8cf6"/><stop offset="0.55" stop-color="#1557d8"/><stop offset="1" stop-color="#0a339c"/></linearGradient></defs><path d="M0.2 13.9 C1.5 7.6 6 1.8 13.6 0.2 C11.7 4.6 11.5 9.2 12.9 13.9 Z" fill="url(#bg)"/><path d="M0.2 13.9c2.5-1.1 8-1.5 12.7 0z" fill="#5a9af0" opacity="0.7"/></svg>
<span class="t s" style="top:537px;font-size:7.4px;color:#fff;left:436.10px;letter-spacing:-0.218px;">Wireshark - Follow ...</span>
<svg style="left:880px;top:531px" width="110" height="20" viewBox="0 0 110 20"><rect x="6.4" y="6" width="7.6" height="5.4" fill="#e4e4e4"/><rect x="9.2" y="6.8" width="4.4" height="3.8" fill="#35c435"/><path d="M5.6 7.6l2 1.2-2 1.2z" fill="#f4f4f4"/><path d="M10.2 11.4v1.8M8 13.4h4.6" stroke="#e8e8e8" stroke-width="0.9"/><rect x="22" y="5" width="5" height="10" rx="1.6" fill="none" stroke="#ededed" stroke-width="0.9"/><path d="M21 7.6v4.8M28 7.6v4.8" stroke="#ededed" stroke-width="0.8"/><path d="M23.4 8h2.2M23.4 11.6h2.2" stroke="#ededed" stroke-width="0.6"/><rect x="35.6" y="6.6" width="5" height="8" rx="1" fill="none" stroke="#ededed" stroke-width="0.9"/><path d="M36.6 6.4v-1.8h3v1.8" fill="none" stroke="#ededed" stroke-width="0.8"/><path d="M41.4 14.6l1.4-1.4" stroke="#ededed" stroke-width="0.7"/><rect x="48.4" y="6" width="8" height="7" fill="#9a9a9a"/><rect x="48.4" y="6" width="8" height="1.6" fill="#d0d0d0"/><path d="M49.6 10.8v-2l1 1.2 1-1.2v2M53 10.8v-2l1 1.2 1-1.2v2" fill="none" stroke="#fff" stroke-width="0.5"/><rect x="63" y="6.4" width="8.4" height="6" fill="none" stroke="#ededed" stroke-width="0.9"/><path d="M62.4 7v-1.4h1.6" fill="none" stroke="#ededed" stroke-width="0.7"/><rect x="62.6" y="10.4" width="2.6" height="4" fill="#1c1c1c" stroke="#ededed" stroke-width="0.7"/><path d="M66.4 14h3.2" stroke="#ededed" stroke-width="0.9"/><circle cx="81.4" cy="9.6" r="4.3" fill="#d9d9d9"/><circle cx="81.4" cy="9.6" r="2.3" fill="none" stroke="#fff" stroke-width="0.9" stroke-dasharray="5.2 2"/><path d="M82.6 7.4l1.8-0.4-0.2 1.9z" fill="#fff"/><path d="M90.8 8h1.5l2.4-2.3v7.8l-2.4-2.3h-1.5z" fill="none" stroke="#ededed" stroke-width="0.75"/><circle cx="98" cy="12.3" r="2.3" fill="#e81123"/><path d="M97.1 11.4l1.8 1.8M98.9 11.4l-1.8 1.8" stroke="#fff" stroke-width="0.55"/></svg>
<span class="t s" style="top:531px;font-size:7.5px;color:#fff;right:7.60px;letter-spacing:-0.313px;">10:55 AM</span>
<span class="t s" style="top:542px;font-size:7.5px;color:#fff;right:7.00px;letter-spacing:-0.308px;">5/21/2022</span>
<div style="left:1021.40px;top:529.20px;width:0.60px;height:23.80px;background:#5a5a5a;"></div>
<div style="left:170.10px;top:152.00px;width:683.50px;height:377.20px;background:#f0f0f0;border:0.7px solid #9a9a9a;border-bottom:none;"></div>
<div style="left:170.70px;top:152.60px;width:682.30px;height:18.60px;background:#fff;"></div>
<svg style="left:175.6px;top:156.6px" width="10" height="10" viewBox="0 0 10 10"><path d="M0.2 9.4 C1.2 5.2 4 1.6 9 0.3 C8 3.2 7.8 6.2 8.8 9.4 Z" fill="#1450c4"/><path d="M0.2 9.4 C1.2 5.2 4 1.6 9 0.3 C5.6 2.6 3.2 6 2.8 9.4z" fill="#3a80ea"/></svg>
<span class="t s" style="top:157px;font-size:7.3px;color:#000;left:188.40px;letter-spacing:-0.207px;">Wireshark - Follow HTTP Stream (tcp.stream eq 4) · OpenVPN TAP-Windows6</span>
<svg style="left:778px;top:154px" width="70" height="15" viewBox="0 0 70 15"><path d="M4.6 7.8h5.4" stroke="#222" stroke-width="0.7" fill="none"/><path d="M31.6 5h5v5.2h-5z" stroke="#222" stroke-width="0.7" fill="none"/><path d="M58.4 4.8l5.6 5.6M64 4.8l-5.6 5.6" stroke="#222" stroke-width="0.7" fill="none"/></svg>
<div style="left:177.30px;top:177.00px;width:669.40px;height:289.60px;background:#fff;border:0.8px solid #58a6e8;"></div>
<div style="left:836.80px;top:177.80px;width:9.00px;height:288.00px;background:#f0f0f0;"></div>
<div style="left:836.80px;top:188.60px;width:9.00px;height:258.30px;background:#cdcdcd;"></div>
<svg style="left:838.8px;top:181.4px" width="5" height="3.4" viewBox="0 0 5 3.4"><path d="M0.4 3l2.1-2.2 2.1 2.2" fill="none" stroke="#444" stroke-width="1.05"/></svg>
<svg style="left:838.8px;top:459.6px" width="5" height="3.4" viewBox="0 0 5 3.4"><path d="M0.4 0.4l2.1 2.2 2.1-2.2" fill="none" stroke="#444" stroke-width="1.05"/></svg>
<div style="left:180.40px;top:180.84px;width:58.78px;height:8.98px;background:#fbeded;"></div>
<span class="t m" style="top:181px;font-size:7.1px;color:#7f0000;left:180.60px;letter-spacing:-0.088px;">GET / HTTP/1.1</span>
<div style="left:180.40px;top:189.77px;width:104.65px;height:8.98px;background:#fbeded;"></div>
<span class="t m" style="top:190px;font-size:7.1px;color:#7f0000;left:180.60px;letter-spacing:-0.087px;">Host: chal1.hackademy.ctf</span>
<div style="left:180.40px;top:198.69px;width:375.70px;height:8.98px;background:#fbeded;"></div>
<span class="t m" style="top:199px;font-size:7.1px;color:#7f0000;left:180.60px;letter-spacing:-0.087px;">User-Agent: Mozilla/5.0 (Windows NT 10.0; Win64; x64; rv:90.0) Gecko/20100101 Firefox/90.0</span>
<div style="left:180.40px;top:207.62px;width:342.34px;height:8.98px;background:#fbeded;"></div>
<span class="t m" style="top:208px;font-size:7.1px;color:#7f0000;left:180.60px;letter-spacing:-0.087px;">Accept: text/html,application/xhtml+xml,application/xml;q=0.9,image/webp,*/*;q=0.8</span>
<div style="left:180.40px;top:216.56px;width:129.67px;height:8.98px;background:#fbeded;"></div>
<span class="t m" style="top:217px;font-size:7.1px;color:#7f0000;left:180.60px;letter-spacing:-0.087px;">Accept-Language: en-US,en;q=0.5</span>
<div style="left:180.40px;top:225.49px;width:125.50px;height:8.98px;background:#fbeded;"></div>
<span class="t m" style="top:226px;font-size:7.1px;color:#7f0000;left:180.60px;letter-spacing:-0.087px;">Accept-Encoding: gzip, deflate</span>
<div style="left:180.40px;top:234.42px;width:92.14px;height:8.98px;background:#fbeded;"></div>
<span class="t m" style="top:234px;font-size:7.1px;color:#7f0000;left:180.60px;letter-spacing:-0.087px;">Connection: keep-alive</span>
<div style="left:180.40px;top:243.34px;width:117.16px;height:8.98px;background:#fbeded;"></div>
<span class="t m" style="top:243px;font-size:7.1px;color:#7f0000;left:180.60px;letter-spacing:-0.087px;">Upgrade-Insecure-Requests: 1</span>
<div style="left:180.40px;top:252.28px;width:100.48px;height:8.98px;background:#fbeded;"></div>
<span class="t m" style="top:252px;font-size:7.1px;color:#7f0000;left:180.60px;letter-spacing:-0.087px;">Cache-Control: max-age=0</span>
<div style="left:180.40px;top:270.13px;width:62.95px;height:8.98px;background:#ededfb;"></div>
<span class="t m" style="top:270px;font-size:7.1px;color:#00007f;left:180.60px;letter-spacing:-0.087px;">HTTP/1.1 200 OK</span>
<div style="left:180.40px;top:279.06px;width:146.35px;height:8.98px;background:#ededfb;"></div>
<span class="t m" style="top:279px;font-size:7.1px;color:#00007f;left:180.60px;letter-spacing:-0.087px;">Date: Sat, 21 May 2022 14:55:01 GMT</span>
<div style="left:180.40px;top:288.00px;width:125.50px;height:8.98px;background:#ededfb;"></div>
<span class="t m" style="top:288px;font-size:7.1px;color:#00007f;left:180.60px;letter-spacing:-0.087px;">Server: Apache/2.4.41 (Ubuntu)</span>
<div style="left:180.40px;top:296.93px;width:87.97px;height:8.98px;background:#ededfb;"></div>
<span class="t m" style="top:297px;font-size:7.1px;color:#00007f;left:180.60px;letter-spacing:-0.087px;">Vary: Accept-Encoding</span>
<div style="left:180.40px;top:305.86px;width:92.14px;height:8.98px;background:#ededfb;"></div>
<span class="t m" style="top:306px;font-size:7.1px;color:#00007f;left:180.60px;letter-spacing:-0.087px;">Content-Encoding: gzip</span>
<div style="left:180.40px;top:314.78px;width:79.63px;height:8.98px;background:#ededfb;"></div>
<span class="t m" style="top:315px;font-size:7.1px;color:#00007f;left:180.60px;letter-spacing:-0.087px;">Content-Length: 200</span>
<div style="left:180.40px;top:323.72px;width:125.50px;height:8.98px;background:#ededfb;"></div>
<span class="t m" style="top:324px;font-size:7.1px;color:#00007f;left:180.60px;letter-spacing:-0.087px;">Keep-Alive: timeout=5, max=100</span>
<div style="left:180.40px;top:332.64px;width:92.14px;height:8.98px;background:#ededfb;"></div>
<span class="t m" style="top:333px;font-size:7.1px;color:#00007f;left:180.60px;letter-spacing:-0.087px;">Connection: Keep-Alive</span>
<div style="left:180.40px;top:341.58px;width:158.86px;height:8.98px;background:#ededfb;"></div>
<span class="t m" style="top:342px;font-size:7.1px;color:#00007f;left:180.60px;letter-spacing:-0.087px;">Content-Type: text/html; charset=UTF-8</span>
<div style="left:180.40px;top:359.44px;width:62.95px;height:8.98px;background:#ededfb;"></div>
<span class="t m" style="top:359px;font-size:7.1px;color:#00007f;left:180.60px;letter-spacing:-0.087px;">&lt;!DOCTYPE html&gt;</span>
<div style="left:180.40px;top:368.37px;width:25.42px;height:8.98px;background:#ededfb;"></div>
<span class="t m" style="top:368px;font-size:7.1px;color:#00007f;left:180.60px;letter-spacing:-0.088px;">&lt;html&gt;</span>
<div style="left:180.40px;top:377.29px;width:42.10px;height:8.98px;background:#ededfb;"></div>
<span class="t m" style="top:377px;font-size:7.1px;color:#00007f;left:180.60px;letter-spacing:-0.088px;">    &lt;head&gt;</span>
<div style="left:180.40px;top:386.23px;width:171.37px;height:8.98px;background:#ededfb;"></div>
<span class="t m" style="top:386px;font-size:7.1px;color:#00007f;left:180.60px;letter-spacing:-0.087px;">        &lt;title&gt;NorthSec Hackademy&lt;/title&gt;</span>
<div style="left:180.40px;top:395.15px;width:46.27px;height:8.98px;background:#ededfb;"></div>
<span class="t m" style="top:395px;font-size:7.1px;color:#00007f;left:180.60px;letter-spacing:-0.087px;">    &lt;/head&gt;</span>
<div style="left:180.40px;top:404.09px;width:42.10px;height:8.98px;background:#ededfb;"></div>
<span class="t m" style="top:404px;font-size:7.1px;color:#00007f;left:180.60px;letter-spacing:-0.088px;">    &lt;body&gt;</span>
<div style="left:180.40px;top:413.01px;width:129.67px;height:8.98px;background:#ededfb;"></div>
<span class="t m" style="top:413px;font-size:7.1px;color:#00007f;left:180.60px;letter-spacing:-0.087px;">        &lt;div class="container"&gt;</span>
<div style="left:180.40px;top:421.94px;width:388.21px;height:8.98px;background:#ededfb;"></div>
<span class="t m" style="top:422px;font-size:7.1px;color:#00007f;left:180.60px;letter-spacing:-0.087px;">            Site is under construction...&lt;!-- FLAG-7c343e260bad642afa1c589687b815b7 (1/2) --&gt;</span>
<div style="left:180.40px;top:430.88px;width:58.78px;height:8.98px;background:#ededfb;"></div>
<span class="t m" style="top:431px;font-size:7.1px;color:#00007f;left:180.60px;letter-spacing:-0.088px;">        &lt;/div&gt;</span>
<div style="left:180.40px;top:439.80px;width:46.27px;height:8.98px;background:#ededfb;"></div>
<span class="t m" style="top:440px;font-size:7.1px;color:#00007f;left:180.60px;letter-spacing:-0.087px;">    &lt;/body&gt;</span>
<div style="left:180.40px;top:448.74px;width:29.59px;height:8.98px;background:#ededfb;"></div>
<span class="t m" style="top:449px;font-size:7.1px;color:#00007f;left:180.60px;letter-spacing:-0.089px;">&lt;/html&gt;</span>
<span class="t s" style="left:178.4px;top:469.2px;font-size:5.7px;font-style:italic;color:#111;letter-spacing:-0.02px">1 <span style="color:#7f0000">client</span> pkt, 1 <span style="color:#00007f">server</span> pkt, 1 turn.</span>
<div style="left:177.20px;top:481.30px;width:281.20px;height:11.20px;background:#e3e3e3;border:0.6px solid #b8b8b8;"></div>
<span class="t s" style="top:483px;font-size:7.2px;color:#000;left:179.60px;letter-spacing:-0.287px;">Entire conversation (878 bytes)</span>
<svg style="left:451px;top:485.6px" width="5" height="3.4" viewBox="0 0 5 3.4"><path d="M0.4 0.4l2.1 2.2 2.1-2.2" fill="none" stroke="#444" stroke-width="0.7"/></svg>
<span class="t s" style="top:483px;font-size:7.2px;color:#000;left:747.00px;letter-spacing:-0.414px;">Show data as</span>
<div style="left:790.40px;top:481.30px;width:56.00px;height:11.20px;background:#e3e3e3;border:0.6px solid #b8b8b8;"></div>
<span class="t s" style="top:483px;font-size:7.2px;color:#000;left:792.60px;letter-spacing:-0.476px;">ASCII</span>
<svg style="left:838.6px;top:485.6px" width="5" height="3.4" viewBox="0 0 5 3.4"><path d="M0.4 0.4l2.1 2.2 2.1-2.2" fill="none" stroke="#444" stroke-width="0.7"/></svg>
<span class="t s" style="top:499px;font-size:7.2px;color:#000;left:177.20px;letter-spacing:-0.357px;">Find:</span>
<div style="left:195.00px;top:497.30px;width:603.40px;height:11.10px;background:#fff;border:0.6px solid #8c8c8c;"></div>
<div style="left:802.90px;top:497.00px;width:43.40px;height:12.00px;background:#e3e3e3;border:1px solid #0078d7;"></div>
<span class="t s" style="top:499px;font-size:7.2px;color:#000;left:824.60px;transform:translateX(-50%);letter-spacing:-0.241px;">Find Next</span>
<div style="left:539.40px;top:514.30px;width:65.60px;height:12.00px;background:#e3e3e3;border:0.6px solid #b8b8b8;"></div>
<span class="t s" style="top:516px;font-size:7.2px;color:#000;left:572.20px;transform:translateX(-50%);letter-spacing:-0.353px;">Filter Out This Stream</span>
<div style="left:609.60px;top:514.30px;width:43.40px;height:12.00px;background:#e3e3e3;border:0.6px solid #b8b8b8;"></div>
<span class="t s" style="top:516px;font-size:7.2px;color:#000;left:631.30px;transform:translateX(-50%);letter-spacing:-0.356px;">Print</span>
<div style="left:658.00px;top:514.30px;width:43.40px;height:12.00px;background:#e3e3e3;border:0.6px solid #b8b8b8;"></div>
<span class="t s" style="top:516px;font-size:7.2px;color:#000;left:679.70px;transform:translateX(-50%);letter-spacing:-0.696px;">Save as…</span>
<div style="left:706.20px;top:514.30px;width:43.40px;height:12.00px;background:#e3e3e3;border:0.6px solid #b8b8b8;"></div>
<span class="t s" style="top:516px;font-size:7.2px;color:#000;left:727.90px;transform:translateX(-50%);letter-spacing:-0.696px;">Back</span>
<div style="left:754.40px;top:514.30px;width:43.60px;height:12.00px;background:#e3e3e3;border:0.6px solid #b8b8b8;"></div>
<span class="t s" style="top:516px;font-size:7.2px;color:#000;left:776.20px;transform:translateX(-50%);letter-spacing:-0.678px;">Close</span>
<div style="left:803.00px;top:514.30px;width:43.20px;height:12.00px;background:#e3e3e3;border:0.6px solid #b8b8b8;"></div>
<span class="t s" style="top:516px;font-size:7.2px;color:#000;left:824.60px;transform:translateX(-50%);letter-spacing:-0.599px;">Help</span>
</body></html>
